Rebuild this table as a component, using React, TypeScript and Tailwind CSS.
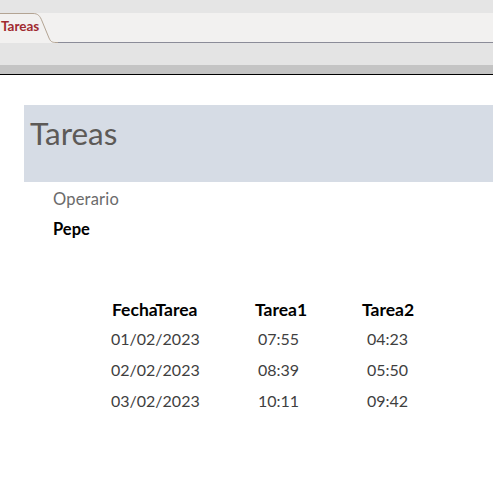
import React from "react";

const rows = [
  ["01/02/2023", "07:55", "04:23"],
  ["02/02/2023", "08:39", "05:50"],
  ["03/02/2023", "10:11", "09:42"],
];

export default function App() {
  return (
    <div className="w-[493px] h-[482px] bg-white overflow-hidden" style={{ fontFamily: "Lato, 'Open Sans', sans-serif" }}>
      {/* top chrome */}
      <div className="h-[13px] bg-[#e5e5e5]" />
      <div className="relative h-[30px] bg-[#f2f1f0] flex">
        <div className="w-[58px] h-full relative">
          <span className="absolute left-[1px] top-[7px] text-[13.5px] font-bold text-[#a02a2f] leading-none">Tareas</span>
          <svg className="absolute left-0 top-0" width="58" height="30" viewBox="0 0 58 30">
            <path d="M0 0.5 H33 C38 0.5 40 3 42 8 L49 25 C50.5 28.5 52 29.5 56 29.5 H58" fill="none" stroke="#b3a493" strokeWidth="1" />
          </svg>
        </div>
        <div className="flex-1 border-b border-[#8b8c98]" />
      </div>
      <div className="h-[22px] bg-[#e4e4e4]" />
      <div className="h-[9px] bg-[#c4c4c4]" />
      <div className="h-[1px] bg-black" />

      {/* report */}
      <div className="pt-[30px]">
        <div className="ml-[24px] h-[77px] bg-[#d6dce5] pl-[6px] pt-[10px]">
          <div className="text-[31.5px] leading-[36px] text-[#5d5a57]">Tareas</div>
        </div>
        <div className="pl-[53px] pt-[7px] text-[16.5px] leading-[20px] text-[#6b6b6b] tracking-[0.2px]">Operario</div>
        <div className="pl-[53px] pt-[10px] text-[16.5px] leading-[20px] font-bold text-black">Pepe</div>

        <div className="mt-[58px] grid grid-cols-[143px_107px_auto] pl-[112px]">
          <div className="font-bold text-black leading-[26px] text-[17.5px]">FechaTarea</div>
          <div className="font-bold text-black leading-[26px] text-[17.5px]">Tarea1</div>
          <div className="font-bold text-black leading-[26px] text-[17.5px]">Tarea2</div>
          {rows.map((r) => (
            <React.Fragment key={r[0]}>
              <div className="text-[#3f3f3f] leading-[31px] text-[16px] -ml-[1px]">{r[0]}</div>
              <div className="text-[#3f3f3f] leading-[31px] text-[16px] pl-[3px]">{r[1]}</div>
              <div className="text-[#3f3f3f] leading-[31px] text-[16px] pl-[5px]">{r[2]}</div>
            </React.Fragment>
          ))}
        </div>
      </div>
    </div>
  );
}
